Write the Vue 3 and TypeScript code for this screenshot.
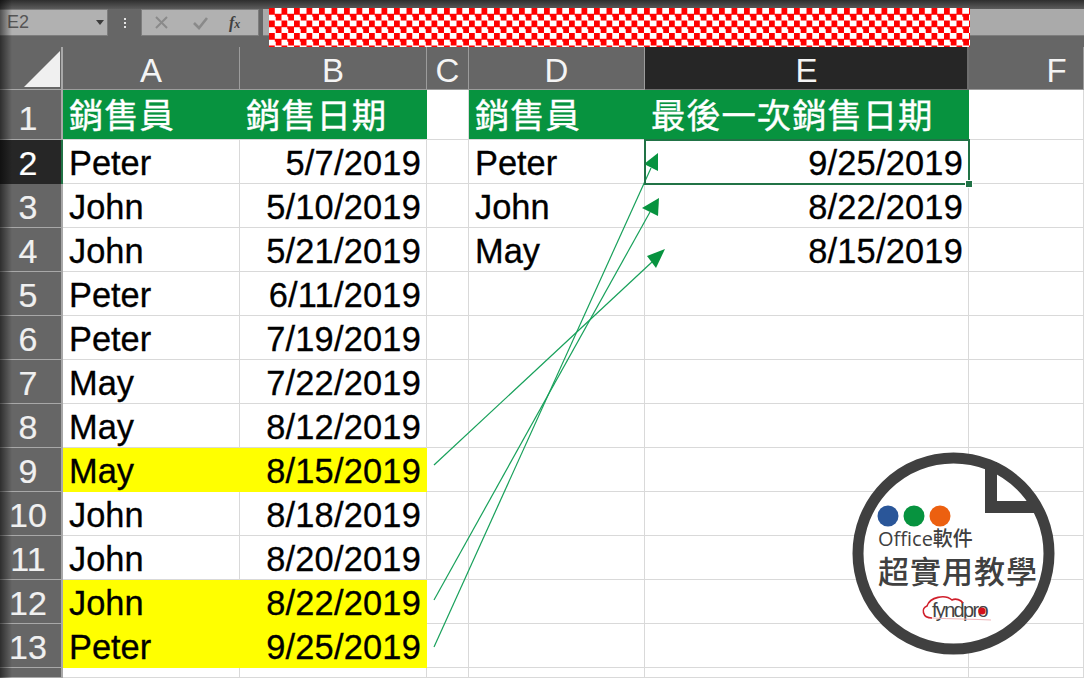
<script setup lang="ts">
interface Row {
  num: number
  a: string
  b: string
  d?: string
  e?: string
  mark?: boolean
}

const columns = ['A', 'B', 'C', 'D', 'E', 'F']

const rows: Row[] = [
  { num: 2, a: 'Peter', b: '5/7/2019', d: 'Peter', e: '9/25/2019' },
  { num: 3, a: 'John', b: '5/10/2019', d: 'John', e: '8/22/2019' },
  { num: 4, a: 'John', b: '5/21/2019', d: 'May', e: '8/15/2019' },
  { num: 5, a: 'Peter', b: '6/11/2019' },
  { num: 6, a: 'Peter', b: '7/19/2019' },
  { num: 7, a: 'May', b: '7/22/2019' },
  { num: 8, a: 'May', b: '8/12/2019' },
  { num: 9, a: 'May', b: '8/15/2019', mark: true },
  { num: 10, a: 'John', b: '8/18/2019' },
  { num: 11, a: 'John', b: '8/20/2019' },
  { num: 12, a: 'John', b: '8/22/2019', mark: true },
  { num: 13, a: 'Peter', b: '9/25/2019', mark: true },
]
</script>

<template>
  <div class="window">
    <div class="topbar"></div>
    <div class="formula-row">
      <div class="namebox">
        <span>E2</span>
        <i class="caret"></i>
      </div>
      <div class="dots"><b></b><b></b><b></b></div>
      <div class="fxbox">
        <svg width="18" height="14" viewBox="0 0 18 14" class="ic">
          <path d="M3 1l11 11M14 1L3 12" stroke="#8a8a8a" stroke-width="2" fill="none" />
        </svg>
        <svg width="18" height="14" viewBox="0 0 18 14" class="ic">
          <path d="M3 7l5 5 8-10" stroke="#8a8a8a" stroke-width="2.6" fill="none" />
        </svg>
        <span class="fx">f<small>x</small></span>
      </div>
      <div class="input"></div>
    </div>

    <div class="sheet">
      <div class="corner"><i></i></div>
      <div
        v-for="c in columns"
        :key="c"
        class="col-head"
        :class="{ active: c === 'E', offscreen: c === 'F' }"
      >{{ c }}</div>

      <div class="row-head first">1</div>
      <div class="cell green">銷售員</div>
      <div class="cell green">銷售日期</div>
      <div class="cell"></div>
      <div class="cell green">銷售員</div>
      <div class="cell green">最後一次銷售日期</div>
      <div class="cell"></div>

      <template v-for="r in rows" :key="r.num">
        <div class="row-head" :class="{ active: r.num === 2 }">{{ r.num }}</div>
        <div class="cell" :class="{ yellow: r.mark }">{{ r.a }}</div>
        <div class="cell right" :class="{ yellow: r.mark }">{{ r.b }}</div>
        <div class="cell"></div>
        <div class="cell">{{ r.d }}</div>
        <div class="cell right" :class="{ selected: r.num === 2 }">
          {{ r.e }}
          <i v-if="r.num === 2" class="handle"></i>
        </div>
        <div class="cell"></div>
      </template>

      <div class="row-head"></div>
      <div v-for="c in columns" :key="'last' + c" class="cell"></div>
    </div>

    <div class="vignette"></div>
    <div class="checker"></div>

    <svg class="arrows" width="1084" height="678" viewBox="0 0 1084 678">
      <g stroke="#17a05a" stroke-width="1.2" fill="none">
        <line x1="434" y1="465" x2="652" y2="262" />
        <line x1="434" y1="600" x2="650" y2="212" />
        <line x1="434" y1="647" x2="651" y2="168" />
      </g>
      <g fill="#07933f">
        <polygon points="665,249 647,256 656,268" />
        <polygon points="659,198 642,208 658,216" />
        <polygon points="658,153 644,164 658,171" />
      </g>
    </svg>

    <div class="badge">
      <svg class="badge-shape" width="230" height="230" viewBox="0 0 230 230">
        <circle cx="113.5" cy="113.5" r="95.5" fill="#fff" stroke="#404040" stroke-width="11" />
        <path d="M151 22 V67 H196" fill="none" stroke="#404040" stroke-width="12" />
        <circle cx="48" cy="76" r="10.5" fill="#2a5699" />
        <circle cx="74" cy="76" r="10.5" fill="#07933f" />
        <circle cx="100" cy="76" r="10.5" fill="#ec6010" />
      </svg>
      <div class="office">Office軟件</div>
      <div class="course">超實用教學</div>
      <div class="fynd">
        <span>fyndpro</span>
        <svg width="74" height="30" viewBox="0 0 74 30">
          <path d="M11 24C1 24 0 14 6 12 9 3 24 0 31 6 35 4 40 6 42 9" fill="none" stroke="#d0202c" stroke-width="1.6" />
          <path d="M11 24C30 25 50 25 70 26" stroke="#eeb4b8" stroke-width="1" fill="none" />
          <circle cx="61" cy="17" r="3.6" fill="#d4101c" />
        </svg>
      </div>
    </div>
  </div>
</template>

<style scoped>
.window {
  position: relative;
  width: 1084px;
  height: 678px;
  overflow: hidden;
  background: #666;
  font-family: "Liberation Sans", "Noto Sans CJK TC", sans-serif;
}
.topbar {
  height: 9px;
  background: linear-gradient(#2e2e2e, #5c5c5c);
}
.formula-row {
  display: flex;
  align-items: stretch;
  height: 27px;
  margin-bottom: 11px;
}
.namebox {
  width: 108px;
  display: flex;
  align-items: center;
  justify-content: space-between;
  padding: 0 3px 0 7px;
  box-sizing: border-box;
  background: #b1b1b1;
  border: 1px solid #7d7d7d;
  border-left: 0;
  color: #555;
  font-size: 18px;
}
.caret {
  border: 4px solid transparent;
  border-top: 5px solid #3c3c3c;
  border-bottom: 0;
}
.dots {
  width: 33px;
  display: flex;
  flex-direction: column;
  align-items: center;
  justify-content: center;
  gap: 2px;
}
.dots b {
  width: 2px;
  height: 2px;
  background: #e4e4e4;
}
.fxbox {
  width: 118px;
  display: flex;
  align-items: center;
  gap: 20px;
  padding-left: 11px;
  box-sizing: border-box;
  background: #b1b1b1;
  border: 1px solid #7d7d7d;
}
.fx {
  font-family: "Liberation Serif", serif;
  font-style: italic;
  font-weight: bold;
  font-size: 16px;
  color: #404040;
}
.fx small {
  font-size: 12px;
}
.input {
  flex: 1;
  margin-left: 4px;
  background: #aaa;
  border-bottom: 1px solid #7d7d7d;
}
.sheet {
  display: grid;
  grid-template-columns: 63px 177px 187px 42px 176px 324px 115px;
  grid-template-rows: 43px 50px repeat(12, 44px) 10px;
  background: #fff;
}
.corner {
  background: #666;
  position: relative;
  box-shadow: inset -2px -1px 0 #a8a8a8;
}
.corner i {
  position: absolute;
  right: 3px;
  bottom: 3px;
  width: 36px;
  height: 36px;
  background: #f0f0f0;
  clip-path: polygon(100% 0, 100% 100%, 0 100%);
}
.col-head {
  display: flex;
  align-items: center;
  justify-content: center;
  padding-top: 4px;
  padding-right: 1px;
  box-sizing: border-box;
  background: #666;
  color: #f4f4f4;
  font-size: 33px;
  box-shadow: inset -1px -1px 0 #9c9c9c;
}
.col-head.active {
  background: #262626;
  box-shadow: inset -2px -1px 0 #6e6e6e;
}
.col-head.offscreen {
  padding-left: 60px;
  padding-right: 0;
}
.row-head {
  display: flex;
  align-items: center;
  justify-content: center;
  padding-top: 2px;
  padding-right: 7px;
  box-sizing: border-box;
  background: #666;
  color: #f0f0f0;
  font-size: 34px;
  -webkit-text-stroke: 0.2px #f0f0f0;
  box-shadow: inset -2px -1px 0 #a8a8a8;
}
.row-head.first {
  padding-top: 6px;
}
.row-head.active {
  background: #262626;
  color: #fff;
  box-shadow: inset -2px 0 0 #217346;
}
.cell {
  position: relative;
  display: flex;
  align-items: center;
  padding: 2px 7px 0 6px;
  box-sizing: border-box;
  color: #000;
  font-size: 34.4px;
  -webkit-text-stroke: 0.3px #000;
  white-space: nowrap;
  box-shadow: inset -1px -1px 0 #d9d9d9;
}
.cell.right {
  justify-content: flex-end;
  padding-right: 6px;
  letter-spacing: 0.2px;
}
.cell.green {
  background: #07933f;
  color: #fff;
  padding: 0 0 5px 6px;
  letter-spacing: 0.9px;
  -webkit-text-stroke: 0.4px #fff;
  box-shadow: inset 0 -1px 0 #d9d9d9;
}
.cell.yellow {
  background: #ff0;
  box-shadow: none;
}
.cell.selected {
  box-shadow: inset 0 0 0 1px #217346, 0 0 0 1px #217346;
  z-index: 1;
}
.handle {
  position: absolute;
  right: -4px;
  bottom: -4px;
  width: 6px;
  height: 6px;
  background: #217346;
  border: 1px solid #fff;
}
.vignette {
  position: absolute;
  left: 0;
  top: 0;
  width: 12px;
  height: 678px;
  background: linear-gradient(90deg, rgba(0, 0, 0, 0.55), rgba(0, 0, 0, 0));
}
.checker {
  position: absolute;
  left: 269px;
  top: 8px;
  width: 701px;
  height: 39px;
  background: repeating-conic-gradient(#fff 0 25%, #f00 0 50%) 0 0 / 12.5px 12.5px;
}
.arrows {
  position: absolute;
  left: 0;
  top: 0;
  pointer-events: none;
}
.badge {
  position: absolute;
  left: 840px;
  top: 440px;
  width: 230px;
  height: 230px;
  color: #404040;
}
.badge-shape {
  position: absolute;
  left: 0;
  top: 0;
}
.office {
  position: absolute;
  left: 38px;
  top: 87px;
  font-family: "Open Sans", "Noto Sans CJK TC", sans-serif;
  font-size: 20px;
  font-weight: 500;
  line-height: 24px;
  white-space: nowrap;
}
.course {
  position: absolute;
  left: 38px;
  top: 111px;
  font-family: "Noto Sans CJK TC", sans-serif;
  font-size: 31px;
  font-weight: 500;
  line-height: 38px;
  letter-spacing: 1px;
  white-space: nowrap;
}
.fynd {
  position: absolute;
  left: 81px;
  top: 154px;
  width: 74px;
  height: 30px;
}
.fynd svg {
  position: absolute;
  left: 0;
  top: 0;
}
.fynd span {
  position: absolute;
  left: 11px;
  top: 4px;
  font-size: 20px;
  letter-spacing: -1.7px;
  line-height: 24px;
  color: #444;
}
</style>

<style>
html, body {
  margin: 0;
  background: #666;
}
</style>
